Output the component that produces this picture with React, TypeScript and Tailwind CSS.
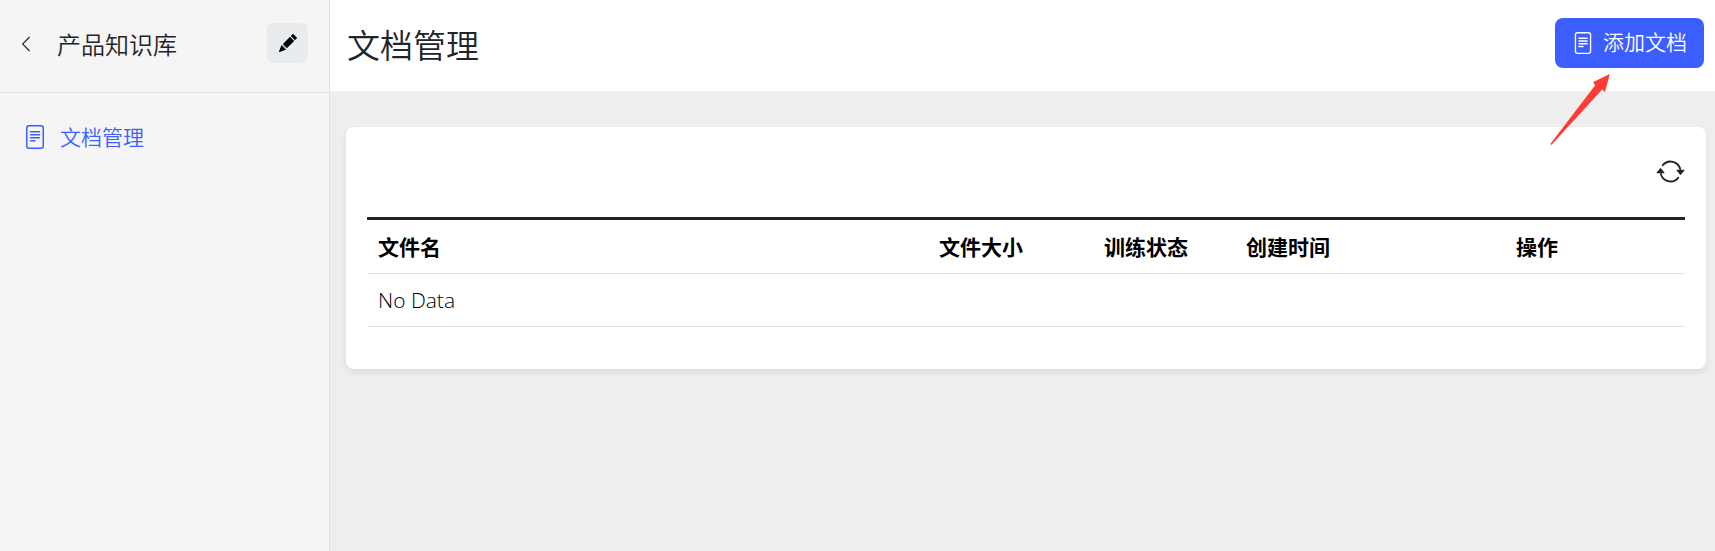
import { FC } from "react";
import {
  BsArrowRepeat,
  BsChevronLeft,
  BsFileText,
  BsPencilFill,
} from "react-icons/bs";

interface Column {
  label: string;
  width: string;
}

// Columns of the document table
const columns: Column[] = [
  { label: "文件名", width: "w-[561px]" },
  { label: "文件大小", width: "w-[165px]" },
  { label: "训练状态", width: "w-[142px]" },
  { label: "创建时间", width: "w-[270px]" },
  { label: "操作", width: "" },
];

const Sidebar: FC = () => {
  return (
    <aside className="w-[330px] shrink-0 border-r border-[#dee2e6] bg-[#f5f5f5]">
      {/* Sidebar Header */}
      <div className="flex h-[93px] items-start border-b border-[#dee2e6] pt-[23px] pr-[21px] pl-[17px]">
        <button aria-label="返回" className="flex h-[42px] items-center">
          <BsChevronLeft className="size-[18px]" />
        </button>
        <h2 className="ml-[22px] flex-1 text-2xl leading-[44px]">
          产品知识库
        </h2>
        <button
          aria-label="编辑"
          className="flex h-10 w-[41px] items-center justify-center rounded-md bg-[#e9ecef] text-black"
        >
          <BsPencilFill className="size-[18px]" />
        </button>
      </div>

      {/* Sidebar Navigation */}
      <nav className="pt-7 pl-[23px]">
        <a href="#docs" className="flex items-center gap-[13px] text-[#3c5eff]">
          <BsFileText className="size-6" />
          <span className="text-[21px] leading-[32px]">文档管理</span>
        </a>
      </nav>
    </aside>
  );
};

const App: FC = () => {
  return (
    <div className="flex min-h-screen bg-[#eee] font-['Open_Sans','Noto_Sans_CJK_SC',sans-serif] font-[350] text-[#212529]">
      <Sidebar />

      {/* Main Content */}
      <div className="flex-1">
        <header className="relative flex h-[91px] items-center justify-between bg-white pr-[11px] pl-[17px]">
          <h1 className="text-[33px] leading-10">文档管理</h1>
          <button className="mb-[5px] flex h-[50px] w-[149px] items-center justify-center gap-[9px] rounded-lg bg-[#3c5eff] text-[21px] text-white">
            <BsFileText className="size-[22px]" />
            添加文档
          </button>
          {/* Pointer arrow */}
          <svg
            aria-hidden="true"
            viewBox="0 0 60 72"
            className="absolute top-[74px] right-[105px] z-10 h-[72px] w-[60px]"
          >
            <path
              d="M59.800 0 55 18 52.200 15.600 1.300 71 .300 70 45 11.500 43.200 8Z"
              fill="#ff3b38"
            />
          </svg>
        </header>

        <main className="pt-9 pr-[9px] pl-4">
          <section className="rounded-lg bg-white px-[21px] pb-[42px] shadow-[0_3px_6px_rgba(0,0,0,0.08)]">
            <div className="mb-[2px] flex h-[88px] items-center justify-end">
              <button aria-label="刷新">
                <BsArrowRepeat className="size-[29px]" />
              </button>
            </div>
            <div className="border-t-3 border-[#212529]">
              <table className="w-full table-fixed text-left text-[21px] leading-[32px] text-black">
                <thead>
                  <tr className="border-b border-[#dee2e6]">
                    {columns.map((column) => (
                      <th
                        key={column.label}
                        className={`px-[11px] pt-[11px] pb-[10px] font-bold ${column.width}`}
                      >
                        {column.label}
                      </th>
                    ))}
                  </tr>
                </thead>
                <tbody>
                  <tr className="border-b border-[#dee2e6]">
                    <td colSpan={columns.length} className="px-[11px] py-[10px]">
                      No Data
                    </td>
                  </tr>
                </tbody>
              </table>
            </div>
          </section>
        </main>
      </div>
    </div>
  );
};

export default App;
